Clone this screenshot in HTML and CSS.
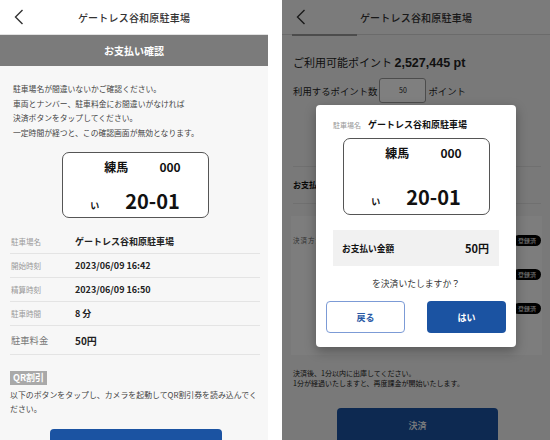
FILE: index.html
```html
<!DOCTYPE html>
<html lang="ja">
<head>
    <meta charset="UTF-8">
    <meta name="viewport" content="width=device-width, initial-scale=1.0">
    <title>お支払い確認</title>
    <link rel="stylesheet" href="styles.css">
</head>
<body>
    <main class="screens">
        <section class="phone confirm">
            <header class="topbar">
                <svg class="back" viewBox="0 0 10 16" width="10" height="16"><polyline points="8.5,1 1.5,8 8.5,15" fill="none" stroke="#333" stroke-width="1.4"/></svg>
                <h1>ゲートレス谷和原駐車場</h1>
            </header>
            <div class="band">お支払い確認</div>
            <div class="body">
                <p class="notice">
                    駐車場名が間違いないかご確認ください。<br>
                    車両とナンバー、駐車料金にお間違いがなければ<br>
                    決済ボタンをタップしてください。<br>
                    一定時間が経つと、この確認画面が無効となります。
                </p>
                <div class="plate">
                    <div class="plate-top"><span>練馬</span><span>000</span></div>
                    <div class="plate-bottom"><span class="kana">い</span><span class="num">20-01</span></div>
                </div>
                <dl class="details">
                    <div class="row"><dt>駐車場名</dt><dd>ゲートレス谷和原駐車場</dd></div>
                    <div class="row"><dt>開始時刻</dt><dd>2023/06/09 16:42</dd></div>
                    <div class="row"><dt>精算時刻</dt><dd>2023/06/09 16:50</dd></div>
                    <div class="row"><dt>駐車時間</dt><dd>8 分</dd></div>
                    <div class="row total"><dt>駐車料金</dt><dd>50円</dd></div>
                </dl>
                <div class="qr">
                    <span class="qr-tag">QR割引</span>
                    <p>以下のボタンをタップし、カメラを起動してQR割引券を読み込んでください。</p>
                </div>
                <button class="btn primary wide"></button>
            </div>
        </section>

        <section class="phone payment">
            <header class="topbar tabbed">
                <svg class="back" viewBox="0 0 10 16" width="10" height="16"><polyline points="8.5,1 1.5,8 8.5,15" fill="none" stroke="#333" stroke-width="1.4"/></svg>
                <h1>ゲートレス谷和原駐車場</h1>
            </header>
            <div class="body">
                <p class="points">ご利用可能ポイント <b>2,527,445 pt</b></p>
                <div class="use-points">
                    利用するポイント数
                    <span class="point-input">50</span>
                    ポイント
                </div>
                <div class="section-title">お支払い方法</div>
                <div class="methods">
                    <div class="method"><span class="method-label">決済方法</span><span class="pill">登録済</span></div>
                    <div class="method"><span class="method-label"></span><span class="pill">登録済</span></div>
                    <div class="method"><span class="method-label"></span><span class="pill">登録済</span></div>
                </div>
                <p class="caution">
                    決済後、1分以内に出庫してください。<br>
                    1分が経過いたしますと、再度課金が開始いたします。
                </p>
                <button class="btn primary pay">決済</button>
            </div>

            <div class="overlay"></div>
            <div class="modal">
                <div class="modal-name"><span>駐車場名</span><b>ゲートレス谷和原駐車場</b></div>
                <div class="plate tall">
                    <div class="plate-top"><span>練馬</span><span>000</span></div>
                    <div class="plate-bottom"><span class="kana">い</span><span class="num">20-01</span></div>
                </div>
                <div class="amount"><span>お支払い金額</span><b>50円</b></div>
                <p class="question">を決済いたしますか？</p>
                <div class="modal-actions">
                    <button class="btn outline">戻る</button>
                    <button class="btn primary">はい</button>
                </div>
            </div>
        </section>
    </main>
</body>
</html>
```

FILE: styles.css
```css
:root {
    --blue: #1b53a2;
    --text: #333;
}
* {
    box-sizing: border-box;
}
html, body {
    margin: 0;
    padding: 0;
    background: #fff;
    font-family: "Noto Sans CJK JP", "Noto Sans", sans-serif;
    color: var(--text);
}
p, dl, dd, h1 {
    margin: 0;
}

.screens {
    display: flex;
    gap: 14px;
    width: 550px;
    height: 440px;
    overflow: hidden;
}
.phone {
    position: relative;
    width: 268px;
    height: 440px;
    overflow: hidden;
    background: #f7f7f7;
}

/* header */
.topbar {
    display: flex;
    align-items: center;
    height: 35px;
    padding: 0 0 0 14px;
    background: #fff;
    border-bottom: 1px solid #e2e2e2;
}
.topbar .back {
    flex: none;
}
.topbar h1 {
    flex: 1;
    margin-right: 24px;
    text-align: center;
    font-size: 10px;
    font-weight: 500;
    letter-spacing: .2px;
}
.band {
    height: 31px;
    line-height: 31px;
    background: #7b7b7b;
    color: #fff;
    text-align: center;
    font-size: 10px;
    font-weight: 700;
}

/* left screen */
.confirm .body {
    padding: 0 8px 0 10px;
}
.notice {
    padding: 16px 0 0 3px;
    font-size: 7.8px;
    line-height: 14.5px;
    color: #444;
}
.plate {
    width: 147px;
    height: 66px;
    margin: 12px auto 0;
    padding-top: 6px;
    border: 1px solid #555;
    border-radius: 7px;
    background: #fff;
    color: #111;
}
.plate-top {
    display: flex;
    justify-content: center;
    gap: 31px;
    padding-left: 15px;
    height: 16px;
    line-height: 16px;
    font-size: 12px;
    font-weight: 700;
}
.plate-bottom {
    display: flex;
    justify-content: center;
    align-items: baseline;
    gap: 26px;
    margin-top: 14px;
    line-height: 24px;
    font-weight: 700;
}
.plate-bottom .kana {
    font-size: 9px;
}
.plate-bottom .num {
    font-size: 20px;
}

.details {
    margin-top: 12px;
}
.details .row {
    display: flex;
    align-items: center;
    height: 24px;
    border-bottom: 1px solid #e4e4e4;
}
.details dt {
    width: 65px;
    padding-left: 1px;
    font-size: 7.5px;
    color: #999;
}
.details dd {
    font-size: 9px;
    font-weight: 700;
    color: #222;
}
.details .total {
    height: 29px;
}
.details .total dt {
    font-size: 9.3px;
    color: #777;
}
.details .total dd {
    font-size: 10px;
}

.qr {
    margin-top: 16px;
}
.qr-tag {
    display: block;
    width: max-content;
    height: 14px;
    line-height: 14px;
    padding: 0 3px;
    background: #a9a9a9;
    color: #fff;
    font-size: 9px;
    font-weight: 700;
}
.qr p {
    margin-top: 3px;
    font-size: 7.9px;
    line-height: 14px;
    color: #444;
}

.btn {
    display: block;
    border: none;
    border-radius: 4px;
    font-family: inherit;
    font-weight: 700;
    font-size: 9px;
}
.btn.primary {
    background: var(--blue);
    color: #fff;
}
.btn.wide {
    width: 172px;
    height: 34px;
    margin: 13px auto 0 40px;
}

/* right screen */
.payment {
    background: #f3f3f3;
}
.tabbed {
    position: relative;
    background: #f6f6f6;
    border-bottom-color: #d6d6d6;
}
.tabbed::after {
    content: "";
    position: absolute;
    left: 10px;
    bottom: -2px;
    width: 65px;
    height: 2px;
    background: #999;
}
.payment .body {
    padding: 0 9px 0 11px;
}
.points {
    margin-top: 18px;
    line-height: 18px;
    font-size: 11px;
    color: #222;
}
.points b {
    font-family: "Liberation Sans", Arial, sans-serif;
    font-size: 12.5px;
}
.use-points {
    display: flex;
    align-items: center;
    gap: 2px;
    margin-top: 6px;
    font-size: 9.4px;
    color: #222;
}
.point-input {
    width: 47px;
    height: 25px;
    line-height: 23px;
    text-align: center;
    border: 1px solid #999;
    border-radius: 3px;
    background: #fff;
    font-size: 7px;
}
.section-title {
    margin-top: 63px;
    height: 38px;
    line-height: 36px;
    border-top: 1px solid #e0e0e0;
    border-bottom: 1px solid #e0e0e0;
    font-size: 8px;
    font-weight: 700;
    color: #111;
}
.methods {
    display: flex;
    flex-direction: column;
    gap: 22px;
    height: 139px;
    margin: 12px -1px 0 -2px;
    padding: 18px 1px 0 2px;
    background: #fafafa;
}
.method {
    display: flex;
    justify-content: space-between;
    align-items: center;
    height: 12px;
}
.method-label {
    font-size: 6.5px;
    color: #666;
    letter-spacing: 1px;
}
.pill {
    padding: 0 5px;
    height: 11px;
    line-height: 11px;
    border-radius: 6px;
    background: #000;
    color: #fff;
    font-size: 6px;
}
.caution {
    margin-top: 14px;
    font-size: 7px;
    line-height: 9.5px;
    color: #222;
}
.btn.pay {
    width: 161px;
    height: 35px;
    margin: 20px auto 0 44px;
    font-weight: 500;
    font-size: 9px;
}

.overlay {
    position: absolute;
    inset: 0;
    background: rgba(0, 0, 0, .5);
}
.modal {
    position: absolute;
    top: 105px;
    left: 34px;
    width: 200px;
    padding: 14px 10px 14px;
    background: #fff;
    border-radius: 4px;
    box-shadow: 0 4px 12px rgba(0, 0, 0, .3);
}
.modal-name {
    display: flex;
    align-items: center;
    gap: 7px;
    padding-left: 7px;
    line-height: 12px;
}
.modal-name span {
    font-size: 7px;
    color: #999;
}
.modal-name b {
    font-size: 9px;
    color: #111;
}
.plate.tall {
    height: 77px;
    margin-top: 7px;
}
.plate.tall .plate-bottom {
    margin-top: 24px;
}
.amount {
    display: flex;
    justify-content: space-between;
    align-items: center;
    height: 36px;
    margin: 15px 7px 0;
    padding: 0 10px 0 9px;
    background: #f1f1f1;
    color: #111;
}
.amount span {
    font-size: 8.7px;
    font-weight: 700;
}
.amount b {
    font-size: 11px;
}
.question {
    margin-top: 12px;
    line-height: 12px;
    text-align: center;
    font-size: 8.8px;
    color: #333;
}
.modal-actions {
    display: flex;
    justify-content: space-between;
    margin-top: 11px;
}
.modal-actions .btn {
    width: 79px;
    height: 32px;
}
.btn.outline {
    background: #fff;
    border: 1px solid #7c9bd6;
    color: #2b5aa6;
}
```
